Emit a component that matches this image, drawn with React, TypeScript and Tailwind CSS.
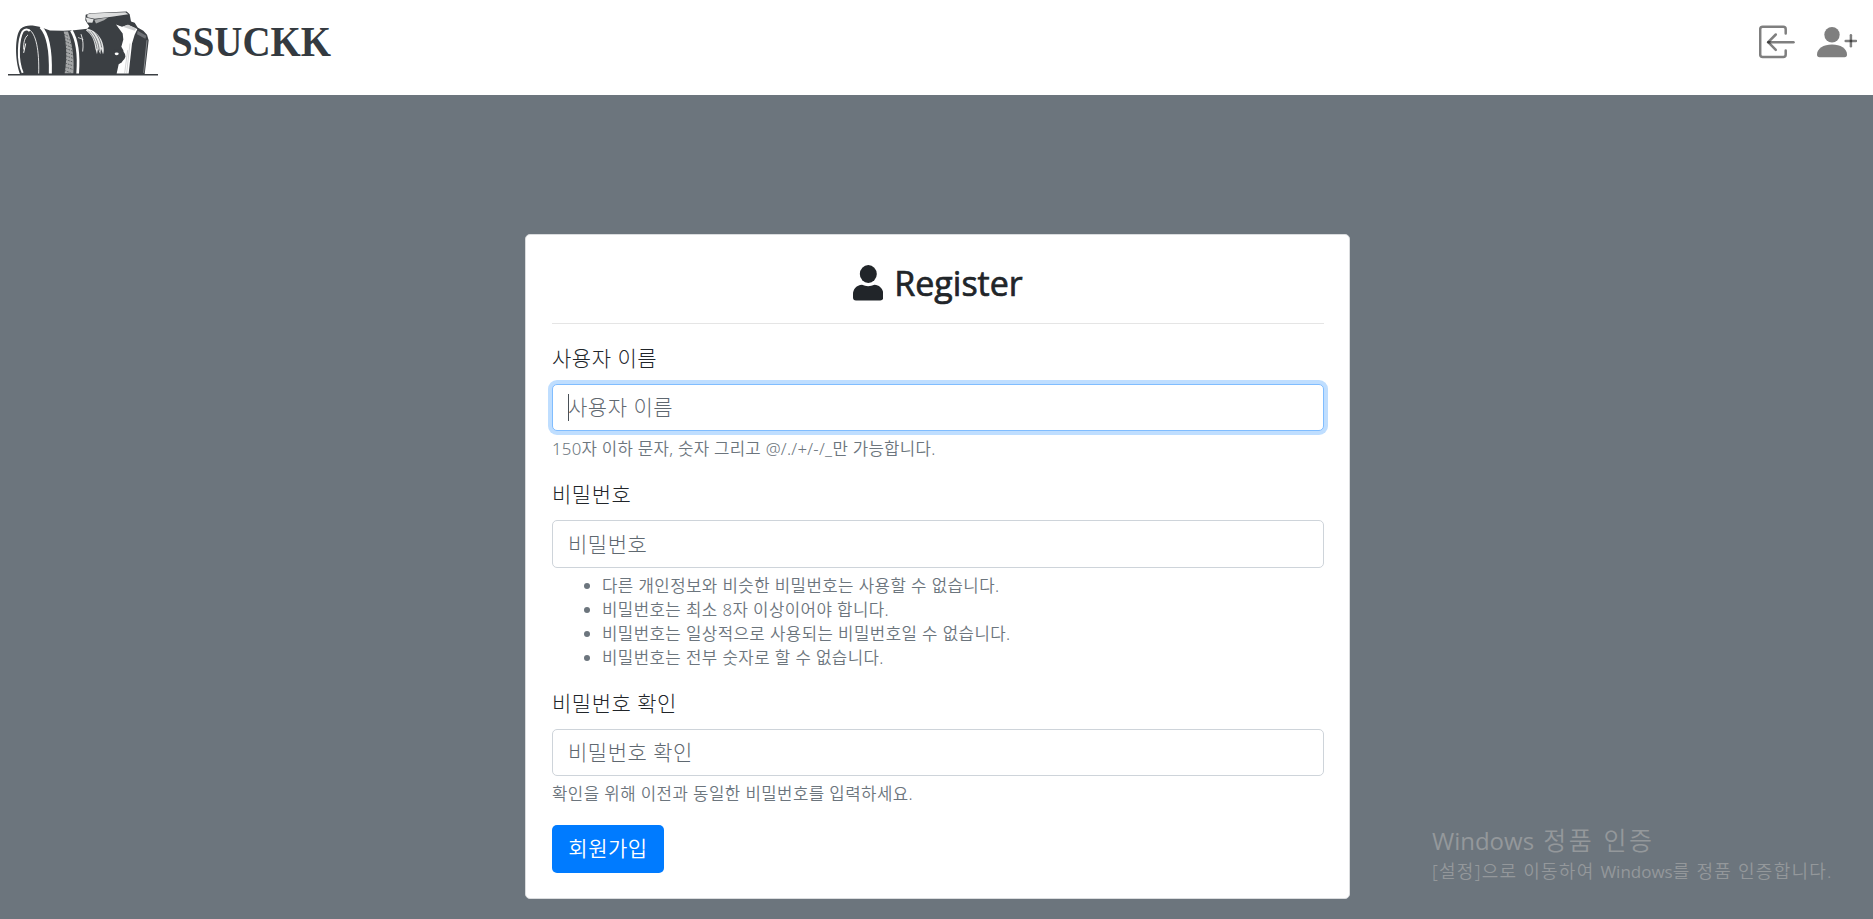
import React from "react";

const FONT = "font-['Noto_Sans','Noto_Sans_CJK_KR',sans-serif]";

function CameraLogo() {
  return (
    <svg viewBox="24 30 450 200" className="h-[67px] w-[150px] shrink-0" aria-label="camera">
      <g fill="#3b3f43">
        <path d="M60 222 C44 180 44 105 62 86 C72 76 86 75 98 76 L118 80 L150 91 L190 92 L222 90 L262 86 L268 78 L262 70 L256 60 L257 44 L270 39 L380 34 L389 42 L393 64 L404 68 L413 82 L430 92 L441 104 L446 120 L434 222 Z" />
        <rect x="24" y="221.500" width="450" height="4.500" />
      </g>
      <g fill="none" stroke="#fff">
        <path d="M68 218 C50 180 56 115 68 94 C74 86 84 86 89 93" strokeWidth="6" />
        <path d="M87 88 C108 100 118 150 116 220" strokeWidth="2.500" />
        <path d="M122 80 C140 98 153 140 151 220" strokeWidth="9" />
        <path d="M214 91 C232 120 237 165 233 220" strokeWidth="8" />
        <path d="M243 102 C250 120 250 135 248 154" strokeWidth="2.500" />
        <path d="M234 112 L250 118" strokeWidth="2" />
        <path d="M84 104 C74 112 70 128 71 148" strokeWidth="3" opacity=".85" />
        <path d="M77 130 L71 158" strokeWidth="3" />
      </g>
      <path d="M191 94 C200 128 201 180 194 219 L220 219 C224 175 216 128 204 94 Z" fill="#a4a6a7" />
      <g stroke="#4c5053" strokeWidth="2.500" fill="none">
        <path d="M192 102l14 7M193 112l17 8M195 123l18 8M197 134l18 8M198 145l20 8M198 156l21 8M198 167l22 8M197 178l23 8M196 189l24 8M195 200l24 8M194 211l18 7" strokeDasharray="5 3" />
      </g>
      <path d="M262 43 L272 40 L376 36 L385 42 L335 50 L284 56 L262 51 Z" fill="#dcdddd" />
      <path d="M257 52 L281 57 L277 68 L262 67 Z" fill="#e2e3e3" />
      <path d="M283 59 L325 51 L312 60 L288 70 Z" fill="#a9abac" />
      <path d="M262 86 C280 88 300 105 307 126 C313 145 312 156 309 162 L303 145 L301 162 L294 146 L291 162 L286 145 C283 120 275 103 258 91 Z" fill="#e4e5e5" />
      <g fill="none" stroke="#4c5053" strokeWidth="2">
        <path d="M272 92C288 107 296 130 298 152M264 91C280 106 289 128 291 146M282 92C296 108 302 124 305 142" />
      </g>
      <path d="M348 73 L366 80 L384 74 L412 87 L404 104 L396 130 L386 220 L350 220 L356 192 L366 186 L372 170 L370 150 L364 140 L370 118 L368 100 Z" fill="#fff" />
      <path d="M368 80 L384 74 L410 85 L404 92 Z" fill="#cfd0d1" />
      <path d="M390 130L380 219M383 150L374 219" stroke="#3b3f43" strokeWidth="3" opacity=".2" />
      <path d="M340 150 C360 144 376 155 376 168 C375 180 364 186 352 184 C342 178 336 164 340 150 Z" fill="#3b3f43" />
      <ellipse cx="350" cy="161" rx="6" ry="4" fill="#fff" />
      <path d="M413 92 L439 107 L436 116 L411 102 Z" fill="#85888b" opacity=".7" />
      <path d="M441 120 L431 218" stroke="#85888b" strokeWidth="3" />
    </svg>
  );
}

function LoginIcon() {
  return (
    <svg viewBox="0 0 36 34" className="h-[34px] w-9" fill="none" stroke="#000" strokeOpacity=".5" strokeWidth="2.500" strokeLinecap="round" strokeLinejoin="round">
      <path d="M26.700 8.500V4.200A2.500 2.500 0 0 0 24.200 1.700H3.700A2.500 2.500 0 0 0 1.200 4.200V29.500A2.500 2.500 0 0 0 3.700 32H24.200A2.500 2.500 0 0 0 26.700 29.500V25.500" />
      <path d="M16.800 9.500L9.200 17.200L16.800 24.900" />
      <path d="M9.200 17.200H34.500" />
    </svg>
  );
}

function AddUserIcon() {
  return (
    <svg viewBox="0 0 40 34" className="h-[34px] w-10">
      <g fill="#000" fillOpacity=".5">
        <circle cx="15" cy="9.700" r="7.700" />
        <path d="M0 29.500C0 23.500 6.500 19.500 15 19.500S30 23.500 30 29.500Q30 32.200 27.500 32.200H2.500Q0 32.200 0 29.500Z" />
      </g>
      <g stroke="#000" strokeOpacity=".5" strokeWidth="2.500" strokeLinecap="round">
        <path d="M33.900 10.300V21.300" />
        <path d="M28.700 15.900H39" />
      </g>
    </svg>
  );
}

function UserIcon() {
  return (
    <svg viewBox="0 0 30 36" className="h-9 w-[30px]" fill="#212529">
      <ellipse cx="15.300" cy="9" rx="8.500" ry="9" />
      <path d="M9 19.800Q15 22.500 21.500 19.800C27 20 30.300 24.500 30.300 29V32.500Q30.300 35.500 27.300 35.500H3Q0 35.500 0 32.500V29C0 24.500 3.500 20 9 19.800Z" />
    </svg>
  );
}

type FieldProps = { label: string; focused?: boolean; children: React.ReactNode };

function Field({ label, focused, children }: FieldProps) {
  return (
    <div className="mb-5">
      <label className="mb-2.5 block pb-px text-[21px] leading-[29px] font-light tracking-[0.5px] text-[#212529]">{label}</label>
      <div
        className={
          focused
            ? "flex h-[47.5px] items-center rounded-[5px] border border-[#80bdff] bg-white px-[15px] ring-4 ring-[#bfdeff]"
            : "flex h-[47.5px] items-center rounded-[5px] border border-[#ced4da] bg-white px-[15px]"
        }
      >
        {focused && <span className="-mr-px h-[27px] w-px bg-[#495057]" />}
        <span className="pb-px text-[21px] leading-[30px] font-light tracking-[0.5px] text-[#5f6870]">{label}</span>
      </div>
      <div className="-mb-px mt-[5px] pt-px text-[16.75px] leading-6 font-[350] tracking-[0.43px] text-[#6c757d]">{children}</div>
    </div>
  );
}

const rules = [
  "다른 개인정보와 비슷한 비밀번호는 사용할 수 없습니다.",
  "비밀번호는 최소 8자 이상이어야 합니다.",
  "비밀번호는 일상적으로 사용되는 비밀번호일 수 없습니다.",
  "비밀번호는 전부 숫자로 할 수 없습니다.",
];

export default function App() {
  return (
    <div className={`relative flex h-[919px] w-[1873px] flex-col overflow-hidden bg-[#6c757d] ${FONT}`}>
      <header className="flex h-[95px] shrink-0 items-start justify-between bg-white pl-2">
        <div className="flex pt-2.5">
          <CameraLogo />
          <span className="mt-[7px] ml-[13px] origin-left scale-x-[0.905] font-['Liberation_Serif',serif] text-[43px] leading-[50px] font-bold text-[#343a40]">
            SSUCKK
          </span>
        </div>
        <div className="flex gap-[22px] pt-[25px] pr-4">
          <LoginIcon />
          <AddUserIcon />
        </div>
      </header>

      <main className="mt-[139px] ml-[525px] h-[665px] w-[825px] rounded-[5px] border border-[#dadcde] bg-white pt-[25px] pr-[25px] pl-[26px]">
        <h1 className="mb-5 flex h-[63.75px] items-start justify-center gap-[11px] border-b border-[#e5e5e5] pt-[5px] font-['Open_Sans',sans-serif] text-[34px] leading-10 font-medium text-[#212529]">
          <UserIcon />
          <span className="-mt-0.5 [-webkit-text-stroke:0.7px_#212529]">Register</span>
        </h1>
        <Field label="사용자 이름" focused>
          <span className="tracking-[0.28px]">150자 이하 문자, 숫자 그리고 @/./+/-/_만 가능합니다.</span>
        </Field>
        <Field label="비밀번호">
          <ul>
            {rules.map((rule) => (
              <li key={rule} className="flex items-center pl-8">
                <span className="mt-px mr-3 size-1.5 rounded-full bg-[#6c757d]" />
                {rule}
              </li>
            ))}
          </ul>
        </Field>
        <Field label="비밀번호 확인">확인을 위해 이전과 동일한 비밀번호를 입력하세요.</Field>
        <button className="flex h-[47.5px] w-28 items-center justify-center rounded-[5px] bg-[#007bff] pb-0.5 text-[21px] leading-[30px] font-[350] tracking-[0.5px] text-white">
          회원가입
        </button>
      </main>

      <aside className="absolute top-[822px] left-[1432px] whitespace-nowrap text-[#94989b]">
        <p className="text-[25px] leading-9 font-[350]">
          <span className="font-['Open_Sans',sans-serif] text-[24px] font-normal">Windows</span>
          <span className="tracking-[2.6px]"> 정품 인증</span>
        </p>
        <p className="text-[18px] leading-6 font-[350]">
          <span className="tracking-[1.25px]">[설정]으로 이동하여 </span>
          <span className="font-['Open_Sans',sans-serif] text-[17px] font-normal">Windows</span>
          <span className="tracking-[1.25px]">를 정품 인증합니다.</span>
        </p>
      </aside>
    </div>
  );
}
